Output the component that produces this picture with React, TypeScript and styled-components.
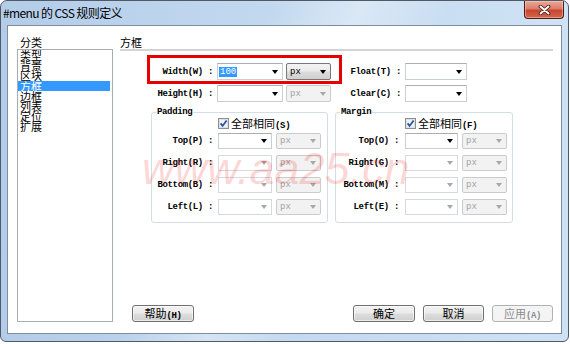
import React from "react";
import styled, { createGlobalStyle } from "styled-components";

const CJK = `"Noto Sans CJK SC", "Liberation Sans", sans-serif`;
const MONO = `"Liberation Mono", "Noto Sans CJK SC", monospace`;

const GlobalStyle = createGlobalStyle`
  html, body {
    margin: 0;
    padding: 0;
    background: #fff;
  }
  body {
    width: 570px;
    height: 344px;
    overflow: hidden;
    font-family: ${CJK};
  }
`;

type ComboKind = "edit" | "editOff" | "unit" | "unitOff";

const comboSkin: Record<ComboKind, string> = {
  edit: `
    background: #fff;
    border: 1px solid #c8ced6;
    border-top-color: #abadb3;
    color: #000;
  `,
  editOff: `
    background: #fff;
    border: 1px solid #d6dadf;
    color: #9a9a9a;
  `,
  unit: `
    background: linear-gradient(180deg, #f3f3f3 0%, #ebebeb 48%, #dcdcdc 52%, #d0d0d0 100%);
    border: 1px solid #767676;
    border-radius: 2px;
    color: #000;
  `,
  unitOff: `
    background: #f2f2f2;
    border: 1px solid #c9cbce;
    border-radius: 2px;
    color: #a3a3a3;
  `,
};

const padRows = [
  { label: "Top(P) :", top: true },
  { label: "Right(R) :" },
  { label: "Bottom(B) :" },
  { label: "Left(L) :" },
];

const marginRows = [
  { label: "Top(O) :", top: true },
  { label: "Right(G) :" },
  { label: "Bottom(M) :" },
  { label: "Left(E) :" },
];

const categories = ["类型", "背景", "区块", "方框", "边框", "列表", "定位", "扩展"];

const App = () => {
  return (
    <Stage>
      <GlobalStyle />
      <Window>
        <TitleBar>
          <Title>#menu 的 CSS 规则定义</Title>
          <CloseButton>
            <svg width="13" height="10" viewBox="0 0 13 10">
              <path d="M2.5 1.5 L10.5 8.5 M10.5 1.5 L2.5 8.5" stroke="#3a1510" strokeWidth="3.6" strokeLinecap="round" />
              <path d="M2.5 1.5 L10.5 8.5 M10.5 1.5 L2.5 8.5" stroke="#fff" strokeWidth="2" strokeLinecap="round" />
            </svg>
          </CloseButton>
        </TitleBar>

        <Client>
          <CategoryColumn>
            <SectionLabel $indent={3}>分类</SectionLabel>
            <ListBox>
              {categories.map((c) => (
                <ListItem key={c} $selected={c === "方框"}>
                  {c}
                </ListItem>
              ))}
            </ListBox>
          </CategoryColumn>

          <PanelColumn>
            <PanelHeader>方框</PanelHeader>

            <TopBlock>
              <FieldRow>
                <FieldLabel $w={93}>Width(W) :</FieldLabel>
                <Combo $w={66} $ml={4} $kind="edit">
                  <Selection>100</Selection>
                  <Arrow />
                </Combo>
                <Combo $w={45} $ml={3} $kind="unit">
                  <ComboText>px</ComboText>
                  <Arrow />
                </Combo>
                <FieldLabel $w={70}>Float(T) :</FieldLabel>
                <Combo $w={62} $ml={4} $kind="edit">
                  <Arrow />
                </Combo>
              </FieldRow>
              <FieldRow>
                <FieldLabel $w={93}>Height(H) :</FieldLabel>
                <Combo $w={66} $ml={4} $kind="edit">
                  <Arrow />
                </Combo>
                <Combo $w={45} $ml={3} $kind="unitOff">
                  <ComboText>px</ComboText>
                  <Arrow $off />
                </Combo>
                <FieldLabel $w={70}>Clear(C) :</FieldLabel>
                <Combo $w={62} $ml={4} $kind="edit">
                  <Arrow />
                </Combo>
              </FieldRow>
            </TopBlock>

            <Groups>
              <BoxGroup title="Padding" hotkey="S" rows={padRows} labelW={61} gap={5} inputW={54} width={177} />
              <BoxGroup title="Margin" hotkey="F" rows={marginRows} labelW={63} gap={6} inputW={53} width={178} />
            </Groups>

            <ButtonBar>
              <DialogButton>
                帮助<Hotkey>(H)</Hotkey>
              </DialogButton>
              <ButtonGroup>
                <DialogButton>确定</DialogButton>
                <DialogButton $w={61}>取消</DialogButton>
                <DialogButton $w={61} disabled>
                  应用<Hotkey>(A)</Hotkey>
                </DialogButton>
              </ButtonGroup>
            </ButtonBar>
          </PanelColumn>
        </Client>
      </Window>

      <Highlight />
      <Watermark>www.aa25.cn</Watermark>
    </Stage>
  );
};

type GroupProps = {
  title: string;
  hotkey: string;
  rows: { label: string; top?: boolean }[];
  labelW: number;
  gap: number;
  inputW: number;
  width: number;
};

const BoxGroup = ({ title, hotkey, rows, labelW, gap, inputW, width }: GroupProps) => (
  <Group $w={width}>
    <Legend>{title}</Legend>
    <CheckRow $indent={labelW + gap}>
      <CheckBox />
      <CheckText>
        全部相同<Hotkey>({hotkey})</Hotkey>
      </CheckText>
    </CheckRow>
    <GroupRows>
      {rows.map((r) => (
        <GroupRow key={r.label}>
          <FieldLabel $w={labelW}>{r.label}</FieldLabel>
          <Combo $w={inputW} $ml={gap} $kind={r.top ? "edit" : "editOff"}>
            <Arrow $off={!r.top} />
          </Combo>
          <Combo $w={45} $ml={4} $kind="unitOff">
            <ComboText>px</ComboText>
            <Arrow $off />
          </Combo>
        </GroupRow>
      ))}
    </GroupRows>
  </Group>
);

const CheckBox = () => (
  <svg width="11" height="11" viewBox="0 0 11 11">
    <rect x="0.5" y="0.5" width="10" height="10" fill="#f4f6f8" stroke="#8e8f8f" />
    <rect x="1.5" y="1.5" width="8" height="8" fill="#eef1f5" stroke="#dde1e6" />
    <path d="M2.6 5.4 L4.6 7.9 L8.6 2.4" stroke="#2b4f9c" strokeWidth="1.7" fill="none" />
  </svg>
);

const Stage = styled.div`
  position: relative;
  width: 570px;
  height: 344px;
`;

const Window = styled.div`
  box-sizing: border-box;
  width: 569px;
  height: 342px;
  border: 1px solid #505a66;
  border-radius: 7px 7px 6px 6px;
  display: flex;
  flex-direction: column;
  overflow: hidden;
  background:
    linear-gradient(115deg, rgba(255, 255, 255, 0) 38%, rgba(255, 255, 255, 0.35) 50%, rgba(255, 255, 255, 0) 62%),
    linear-gradient(90deg, #b3cce8 0%, #c2d8ef 45%, #cfe2f5 100%);
`;

const TitleBar = styled.div`
  height: 24px;
  display: flex;
  align-items: flex-start;
  flex-shrink: 0;
`;

const Title = styled.div`
  padding-left: 2px;
  font: 12px/24px ${CJK};
  letter-spacing: -0.6px;
  color: #000;
  white-space: nowrap;
`;

const CloseButton = styled.div`
  box-sizing: border-box;
  margin-left: auto;
  margin-right: 4px;
  width: 40px;
  height: 18px;
  border: 1px solid #4e1e16;
  border-top: none;
  border-radius: 0 0 4px 4px;
  display: flex;
  align-items: center;
  justify-content: center;
  background: linear-gradient(180deg, #e9a899 0%, #dc7d6b 45%, #c8452f 55%, #d4664c 100%);
  box-shadow: inset 0 0 0 1px rgba(255, 220, 210, 0.45);
`;

const Client = styled.div`
  box-sizing: border-box;
  flex: 1;
  margin: 0 6px 7px 6px;
  border: 1px solid #7d8ea1;
  background: #fff;
  display: flex;
  gap: 7px;
  padding: 9px 8px 11px 9px;
`;

const CategoryColumn = styled.div`
  width: 96px;
  display: flex;
  flex-direction: column;
`;

const SectionLabel = styled.div<{ $indent?: number }>`
  font: 11px/14px ${CJK};
  padding-left: ${(p) => p.$indent ?? 0}px;
  color: #000;
`;

const ListBox = styled.div`
  flex: 1;
  border: 1px solid #a7adb5;
  background: #fff;
`;

const ListItem = styled.div<{ $selected?: boolean }>`
  height: 10.2px;
  margin-right: 2px;
  padding-left: 2px;
  font: 11px/10.2px ${CJK};
  color: ${(p) => (p.$selected ? "#fff" : "#000")};
  background: ${(p) => (p.$selected ? "#3399ff" : "transparent")};
  white-space: nowrap;
`;

const PanelColumn = styled.div`
  flex: 1;
  display: flex;
  flex-direction: column;
`;

const PanelHeader = styled.div`
  font: 11px/14px ${CJK};
  color: #000;
  border-bottom: 2px solid #d4d4d4;
`;

const TopBlock = styled.div`
  margin-top: 12px;
  display: flex;
  flex-direction: column;
  gap: 5px;
`;

const FieldRow = styled.div`
  height: 17px;
  display: flex;
  align-items: center;
`;

const FieldLabel = styled.div<{ $w: number }>`
  width: ${(p) => p.$w}px;
  flex-shrink: 0;
  text-align: right;
  font: bold 9px/12px ${MONO};
  letter-spacing: -0.35px;
  color: #000;
  white-space: pre;
`;

const Combo = styled.div<{ $w: number; $kind: ComboKind; $ml?: number }>`
  box-sizing: border-box;
  width: ${(p) => p.$w}px;
  height: 100%;
  flex-shrink: 0;
  margin-left: ${(p) => p.$ml ?? 0}px;
  display: flex;
  align-items: center;
  padding-left: 1px;
  ${(p) => comboSkin[p.$kind]}
`;

const ComboText = styled.span`
  padding-left: 2px;
  font: 9px/10px ${MONO};
`;

const Selection = styled.span`
  padding: 0 1px;
  font: 9px/10px ${MONO};
  background: #3399ff;
  color: #fff;
`;

const Arrow = styled.span<{ $off?: boolean }>`
  margin-left: auto;
  margin-right: 4px;
  width: 0;
  height: 0;
  border-left: 3px solid transparent;
  border-right: 3px solid transparent;
  border-top: 4px solid ${(p) => (p.$off ? "#a8a8a8" : "#000")};
`;

const Groups = styled.div`
  margin-top: 5px;
  padding-left: 31px;
  display: flex;
  gap: 7px;
`;

const Group = styled.fieldset<{ $w: number }>`
  box-sizing: border-box;
  width: ${(p) => p.$w}px;
  min-width: 0;
  margin: 0;
  padding: 0 0 7px 0;
  border: 1px solid #d3dde4;
  border-radius: 3px;
`;

const Legend = styled.legend`
  margin-left: 4px;
  padding: 0 1px;
  font: bold 9px/10px ${MONO};
  letter-spacing: -0.35px;
  color: #000;
`;

const CheckRow = styled.div<{ $indent: number }>`
  height: 13px;
  display: flex;
  align-items: center;
  padding-left: ${(p) => p.$indent}px;
`;

const CheckText = styled.span`
  margin-left: 2px;
  font: 11px/13px ${CJK};
  color: #000;
  white-space: nowrap;
`;

const Hotkey = styled.span`
  font: bold 9px ${MONO};
  letter-spacing: -0.35px;
`;

const GroupRows = styled.div`
  margin-top: 3px;
  display: flex;
  flex-direction: column;
  gap: 6px;
`;

const GroupRow = styled.div`
  height: 16px;
  display: flex;
  align-items: center;
`;

const ButtonBar = styled.div`
  margin-top: auto;
  padding-left: 12px;
  display: flex;
  align-items: flex-end;
`;

const ButtonGroup = styled.div`
  margin-left: auto;
  display: flex;
  gap: 8px;
`;

const DialogButton = styled.button<{ $w?: number }>`
  box-sizing: border-box;
  width: ${(p) => p.$w ?? 62}px;
  height: 17px;
  padding: 0;
  border: 1px solid #707070;
  border-radius: 3px;
  background: linear-gradient(180deg, #f2f2f2 0%, #ebebeb 48%, #dddddd 52%, #cfcfcf 100%);
  box-shadow: inset 0 0 0 1px rgba(255, 255, 255, 0.6);
  font: 11px/15px ${CJK};
  color: #000;
  &:disabled {
    border-color: #adb2b5;
    background: #f4f4f4;
    color: #8d8d8d;
    box-shadow: none;
  }
`;

const Highlight = styled.div`
  position: absolute;
  left: 147px;
  top: 55px;
  width: 195px;
  height: 29px;
  box-sizing: border-box;
  border: 3px solid #e60000;
  pointer-events: none;
`;

const Watermark = styled.div`
  position: absolute;
  left: 142px;
  top: 146px;
  font: italic 45px/45px "Liberation Sans", sans-serif;
  color: rgba(230, 0, 0, 0.17);
  white-space: nowrap;
  pointer-events: none;
`;

export default App;
